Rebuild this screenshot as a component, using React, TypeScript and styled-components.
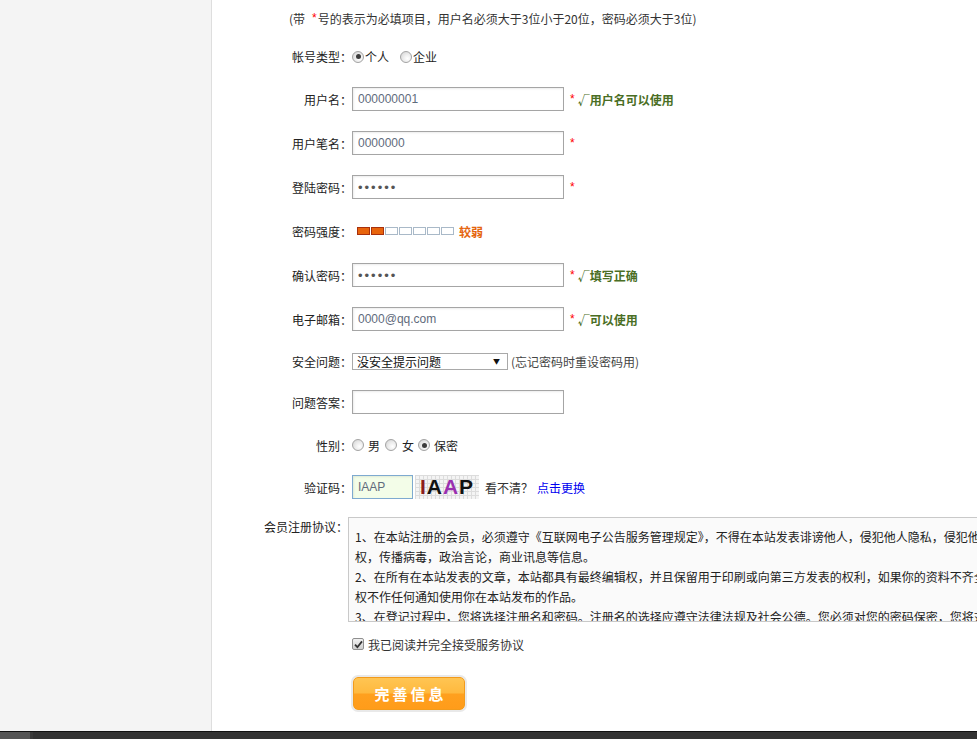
import React from 'react';
import styled, { createGlobalStyle } from 'styled-components';

const GlobalStyle = createGlobalStyle`
  html, body { margin: 0; padding: 0; height: 100%; overflow: hidden; }
  body {
    font-family: "Noto Sans CJK SC", "Liberation Sans", sans-serif;
    font-size: 12px;
    color: #333;
    background: #fff;
  }
`;

const Page = styled.div`
  display: flex;
  flex-direction: column;
  width: 977px;
  height: 739px;
  overflow: hidden;
`;

const Body = styled.div`
  display: flex;
  flex: 1;
  min-height: 0;
`;

const Sidebar = styled.aside`
  width: 211px;
  flex-shrink: 0;
  background: #f4f4f4;
  border-right: 1px solid #dedede;
`;

const Main = styled.main`
  flex: 1;
  min-width: 0;
  overflow: hidden;
  background: #fff;
`;

const Taskbar = styled.div`
  box-sizing: border-box;
  height: 8px;
  display: flex;
  background: #333;
  border-top: 1px solid #111;
`;

const TaskStart = styled.div`
  width: 30px;
  background: #555;
  border-right: 3px solid #3a3a3a;
`;

const Form = styled.form`
  display: flex;
  flex-direction: column;
`;

const Notice = styled.div`
  height: 36px;
  display: flex;
  align-items: center;
  padding-left: 77px;
  color: #333;
  white-space: nowrap;
`;

const NoticeStar = styled.span`
  margin: 0 1px 0 7px;
  color: #f00;
  font: 12px "Liberation Sans", Arial, sans-serif;
`;

const Row = styled.div<{ $h: number }>`
  display: flex;
  align-items: center;
  height: ${p => p.$h}px;
  white-space: nowrap;
`;

const Label = styled.label<{ $w?: number }>`
  width: ${p => p.$w ?? 140}px;
  flex-shrink: 0;
  text-align: right;
  color: #222;
`;

const TextInput = styled.input<{ $w?: number; $captcha?: boolean }>`
  box-sizing: border-box;
  width: ${p => p.$w ?? 212}px;
  height: 24px;
  margin: 0;
  padding: 0 5px;
  border: 1px solid ${p => (p.$captcha ? '#7eaad0' : '#a5a5a5')};
  background: ${p => (p.$captcha ? '#f3fde8' : '#fff')};
  color: #5f6b7c;
  font: 12px "Liberation Sans", Arial, sans-serif;
  box-shadow: inset 1px 1px 2px rgba(0, 0, 0, 0.08);
  outline: none;
  &[type='password'] { letter-spacing: 2px; font-size: 13px; color: #555; }
`;

const Star = styled.span`
  margin-left: 6px;
  color: #f00;
  font: 12px "Liberation Sans", Arial, sans-serif;
`;

const Hint = styled.span`
  margin-left: 3px;
  color: #4a6e24;
  font-weight: bold;
`;

const Option = styled.label<{ $gap: number; $after: number }>`
  display: inline-flex;
  align-items: center;
  gap: ${p => p.$gap}px;
  margin-right: ${p => p.$after}px;
  color: #222;
`;

const RadioDot = styled.span<{ $checked?: boolean }>`
  box-sizing: border-box;
  width: 12px;
  height: 12px;
  border-radius: 50%;
  border: 1px solid #a3a3a3;
  background: radial-gradient(circle at 65% 65%, #fff 0%, #ececec 45%, #cfcfcf 100%);
  display: inline-flex;
  align-items: center;
  justify-content: center;
  flex-shrink: 0;
  &::after {
    content: '';
    width: 5px;
    height: 5px;
    border-radius: 50%;
    background: #3c3c3c;
    display: ${p => (p.$checked ? 'block' : 'none')};
  }
`;

const Meter = styled.div`
  display: flex;
  gap: 1px;
  margin-left: 5px;
`;

const Cell = styled.span<{ $on?: boolean }>`
  box-sizing: border-box;
  width: 13px;
  height: 8px;
  border: 1px solid ${p => (p.$on ? '#a8300c' : '#a9b9c8')};
  background: ${p => (p.$on ? '#e8640c' : '#fff')};
`;

const Level = styled.span`
  margin-left: 5px;
  color: #e5650e;
  font-weight: bold;
`;

const Select = styled.div`
  box-sizing: border-box;
  width: 156px;
  height: 17px;
  border: 1px solid #a9a9a9;
  background: #fff;
  display: flex;
  align-items: center;
  justify-content: space-between;
  padding: 0 7px 0 4px;
  color: #111;
`;

const Caret = styled.span`
  font-size: 7px;
  color: #111;
`;

const Aside = styled.span`
  margin-left: 3px;
  color: #444;
`;

const Captcha = styled.div`
  margin-left: 2px;
  width: 64px;
  height: 24px;
  display: flex;
  align-items: center;
  justify-content: center;
  background-color: #f4f4f4;
  background-image: linear-gradient(#dcdcdc 1px, transparent 1px),
    linear-gradient(90deg, #dcdcdc 1px, transparent 1px);
  background-size: 4px 4px;
  font: bold 21px "Liberation Sans", Arial, sans-serif;
  letter-spacing: 1px;
`;

const CapChar = styled.span<{ $c: string }>`
  color: ${p => p.$c};
`;

const Muted = styled.span`
  margin-left: 6px;
  color: #333;
`;

const Link = styled.a`
  margin-left: 4px;
  color: #0000f0;
  text-decoration: none;
  cursor: pointer;
`;

const AgreeRow = styled.div`
  display: flex;
  align-items: flex-start;
  margin-top: 10px;
`;

const AgreeLabel = styled(Label)`
  line-height: 20px;
`;

const AgreeBox = styled.div`
  box-sizing: border-box;
  width: 720px;
  height: 105px;
  border: 1px solid #c9c9c9;
  background: #fafafa;
  padding: 9px 0 0 6px;
  overflow: hidden;
  line-height: 20px;
  color: #222;
  flex-shrink: 0;
`;

const AgreeLine = styled.div`
  white-space: nowrap;
`;

const CheckRow = styled.div`
  display: flex;
  align-items: center;
  gap: 4px;
  height: 44px;
  padding-left: 140px;
  color: #333;
`;

const CheckBox = styled.span`
  box-sizing: border-box;
  width: 12px;
  height: 12px;
  border: 1px solid #8f8f8f;
  border-radius: 2px;
  background: linear-gradient(#f2f2f2, #cfcfcf);
  display: inline-flex;
  align-items: center;
  justify-content: center;
`;

const SubmitWrap = styled.div`
  margin: 11px 0 0 141px;
`;

const Submit = styled.button`
  width: 112px;
  height: 33px;
  border: 1px solid #f29b1c;
  border-radius: 5px;
  background: linear-gradient(#ffc553 0%, #ffb93e 48%, #ffa01e 52%, #ff9c1a 100%);
  box-shadow: 0 0 0 2px #e9e9e9;
  color: #fff;
  font: bold 15px "Noto Sans CJK SC", sans-serif;
  letter-spacing: 3px;
  padding: 0 0 0 3px;
  cursor: pointer;
`;

const agreement = [
  '1、在本站注册的会员，必须遵守《互联网电子公告服务管理规定》，不得在本站发表诽谤他人，侵犯他人隐私，侵犯他人知识产',
  '权，传播病毒，政治言论，商业讯息等信息。',
  '2、在所有在本站发表的文章，本站都具有最终编辑权，并且保留用于印刷或向第三方发表的权利，如果你的资料不齐全，我们将有',
  '权不作任何通知使用你在本站发布的作品。',
  '3、在登记过程中，您将选择注册名和密码。注册名的选择应遵守法律法规及社会公德。您必须对您的密码保密，您将对您注册名和',
  '密码发生的所有活动承担责任。',
];

const Radio = ({ text, checked, gap, after }: { text: string; checked?: boolean; gap: number; after: number }) => (
  <Option $gap={gap} $after={after}>
    <RadioDot $checked={checked} />
    {text}
  </Option>
);

export default function App() {
  return (
    <Page>
      <GlobalStyle />
      <Body>
        <Sidebar />
        <Main>
          <Form onSubmit={e => e.preventDefault()}>
            <Notice>
              (带<NoticeStar>*</NoticeStar>号的表示为必填项目，用户名必须大于3位小于20位，密码必须大于3位)
            </Notice>

            <Row $h={41}>
              <Label>帐号类型：</Label>
              <Radio text="个人" checked gap={1} after={11} />
              <Radio text="企业" gap={1} after={0} />
            </Row>

            <Row $h={44}>
              <Label>用户名：</Label>
              <TextInput defaultValue="000000001" readOnly />
              <Star>*</Star>
              <Hint>√用户名可以使用</Hint>
            </Row>

            <Row $h={44}>
              <Label>用户笔名：</Label>
              <TextInput defaultValue="0000000" readOnly />
              <Star>*</Star>
            </Row>

            <Row $h={44}>
              <Label>登陆密码：</Label>
              <TextInput type="password" defaultValue="123456" readOnly />
              <Star>*</Star>
            </Row>

            <Row $h={44}>
              <Label>密码强度：</Label>
              <Meter>
                {[0, 1, 2, 3, 4, 5, 6].map(i => (
                  <Cell key={i} $on={i < 2} />
                ))}
              </Meter>
              <Level>较弱</Level>
            </Row>

            <Row $h={44}>
              <Label>确认密码：</Label>
              <TextInput type="password" defaultValue="123456" readOnly />
              <Star>*</Star>
              <Hint>√填写正确</Hint>
            </Row>

            <Row $h={44}>
              <Label>电子邮箱：</Label>
              <TextInput defaultValue="0000@qq.com" readOnly />
              <Star>*</Star>
              <Hint>√可以使用</Hint>
            </Row>

            <Row $h={40}>
              <Label>安全问题：</Label>
              <Select>
                没安全提示问题
                <Caret>▼</Caret>
              </Select>
              <Aside>(忘记密码时重设密码用)</Aside>
            </Row>

            <Row $h={42}>
              <Label>问题答案：</Label>
              <TextInput readOnly />
            </Row>

            <Row $h={44}>
              <Label>性别：</Label>
              <Radio text="男" gap={4} after={5} />
              <Radio text="女" gap={5} after={4} />
              <Radio text="保密" checked gap={4} after={0} />
            </Row>

            <Row $h={40}>
              <Label>验证码：</Label>
              <TextInput $w={61} $captcha defaultValue="IAAP" readOnly />
              <Captcha>
                <CapChar $c="#8c1c1c">I</CapChar>
                <CapChar $c="#111">A</CapChar>
                <CapChar $c="#9a2fb0">A</CapChar>
                <CapChar $c="#111">P</CapChar>
              </Captcha>
              <Muted>看不清？</Muted>
              <Link>点击更换</Link>
            </Row>

            <AgreeRow>
              <AgreeLabel $w={136}>会员注册协议：</AgreeLabel>
              <AgreeBox>
                {agreement.map((line, i) => (
                  <AgreeLine key={i}>{line}</AgreeLine>
                ))}
              </AgreeBox>
            </AgreeRow>

            <CheckRow>
              <CheckBox>
                <svg width="9" height="9" viewBox="0 0 9 9">
                  <path d="M1 4.6 L3.4 7.2 L8 1.4" fill="none" stroke="#333" strokeWidth="1.8" />
                </svg>
              </CheckBox>
              我已阅读并完全接受服务协议
            </CheckRow>

            <SubmitWrap>
              <Submit type="submit">完善信息</Submit>
            </SubmitWrap>
          </Form>
        </Main>
      </Body>
      <Taskbar>
        <TaskStart />
      </Taskbar>
    </Page>
  );
}
